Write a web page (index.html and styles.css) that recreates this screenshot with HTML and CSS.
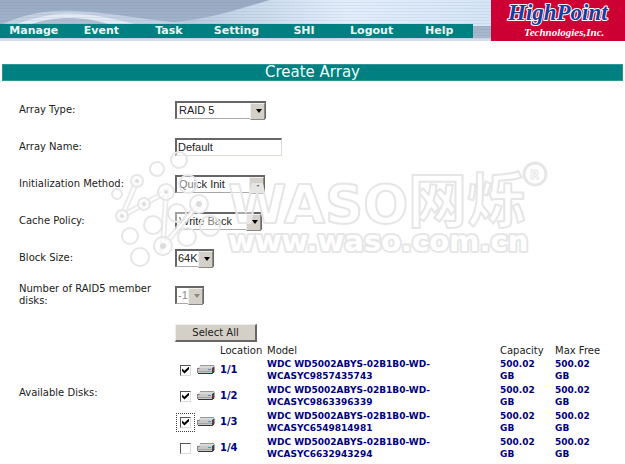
FILE: index.html
```html
<!DOCTYPE html>
<html lang="en">
<head>
<meta charset="utf-8">
<title>Create Array</title>
<link rel="stylesheet" href="styles.css">
</head>
<body>
<svg class="defs" aria-hidden="true">
  <linearGradient id="sky" x1="0" x2="1" y1="0" y2="0">
    <stop offset="0" stop-color="#a9bad0"/><stop offset=".3" stop-color="#c6d6e9"/><stop offset=".6" stop-color="#e3eefb"/><stop offset="1" stop-color="#d6e5f6"/>
  </linearGradient>
  <symbol id="disk" viewBox="0 0 18 10">
    <path d="M3 1H17L15 3H1Z" fill="#d8d8d8"/>
    <path d="M3 .5H17" stroke="#999"/>
    <path d="M1 3H15V8H1Z" fill="#c4c8c6"/>
    <path d="M15 3L17.500 1V7L15 9Z" fill="#444"/>
    <path d="M1 6.500H15" stroke="#a2a2a2"/>
    <path d="M.5 3V8" stroke="#888"/>
    <path d="M1 8.500H15L17 7" fill="none" stroke="#333"/>
    <path d="M11 4.500H14" stroke="#0bb"/>
    <path d="M1 3.500H2.500" stroke="#b050b0"/>
  </symbol>
</svg>
<header class="top">
  <div class="banner">
    <svg class="swoosh" viewBox="0 0 491 41" preserveAspectRatio="none" aria-hidden="true">
      <path d="M130 26C210 22 240 8 270 0H491V26Z" fill="url(#sky)"/>
      <path d="M0 25C30 12 50 10 75 11C120 13 150 22 220 26H0Z" fill="#c3d0e2"/>
      <path d="M12 26C40 15 60 12 80 14C110 16 130 24 145 26Z" fill="#e2eaf5"/>
      <path d="M25 26C50 17 70 17 85 19C100 21 108 24 114 26Z" fill="#aebdd2"/>
      <path d="M0 38H491V41H0Z" fill="#d3dded"/>
    </svg>
    <nav class="menu">
      <a href="#">Manage</a><a href="#">Event</a><a href="#">Task</a><a href="#">Setting</a><a href="#">SHI</a><a href="#">Logout</a><a href="#">Help</a>
    </nav>
  </div>
  <svg class="brand" viewBox="0 0 134 41" role="img" aria-label="HighPoint Technologies, Inc.">
    <text class="brand-name" x="17" y="20">HighPoint</text>
    <text class="brand-sub" x="33" y="36">Technologies,Inc.</text>
  </svg>
</header>
<main>
  <h1>Create Array</h1>
  <form class="form">
    <div class="row"><label for="type">Array Type:</label>
      <span class="pick w-type"><select id="type"><option>RAID 5</option></select></span></div>
    <div class="row"><label for="name">Array Name:</label>
      <input class="name" id="name" type="text" value="Default"></div>
    <div class="row"><label for="init">Initialization Method:</label>
      <span class="pick w-init"><select id="init"><option>Quick Init</option></select></span></div>
    <div class="row"><label for="cache">Cache Policy:</label>
      <span class="pick w-cache"><select id="cache"><option>Write Back</option></select></span></div>
    <div class="row"><label for="block">Block Size:</label>
      <span class="pick w-block"><select id="block"><option>64K</option></select></span></div>
    <div class="row"><label for="members">Number of RAID5 member disks:</label>
      <span class="pick w-members off"><select id="members" disabled><option>-1</option></select></span></div>
    <div class="row disks"><span>Available Disks:</span>
      <div class="list">
        <button type="button">Select All</button>
        <table>
          <thead><tr><th class="c-check"></th><th class="c-icon"></th><th class="c-loc">Location</th><th>Model</th><th class="c-cap">Capacity</th><th class="c-free">Max Free</th></tr></thead>
          <tbody>
            <tr><td><input type="checkbox" aria-label="Disk 1/1" checked></td><td><svg class="disk"><use href="#disk"/></svg></td><td class="loc">1/1</td><td>WDC WD5002ABYS-02B1B0-WD-WCASYC9857435743</td><td class="size">500.02 GB</td><td class="size">500.02 GB</td></tr>
            <tr><td><input type="checkbox" aria-label="Disk 1/2" checked></td><td><svg class="disk"><use href="#disk"/></svg></td><td class="loc">1/2</td><td>WDC WD5002ABYS-02B1B0-WD-WCASYC9863396339</td><td class="size">500.02 GB</td><td class="size">500.02 GB</td></tr>
            <tr><td><input class="focused" type="checkbox" aria-label="Disk 1/3" checked></td><td><svg class="disk"><use href="#disk"/></svg></td><td class="loc">1/3</td><td>WDC WD5002ABYS-02B1B0-WD-WCASYC6549814981</td><td class="size">500.02 GB</td><td class="size">500.02 GB</td></tr>
            <tr><td><input type="checkbox" aria-label="Disk 1/4"></td><td><svg class="disk"><use href="#disk"/></svg></td><td class="loc">1/4</td><td>WDC WD5002ABYS-02B1B0-WD-WCASYC6632943294</td><td class="size">500.02 GB</td><td class="size">500.02 GB</td></tr>
          </tbody>
        </table>
      </div>
    </div>
  </form>
  <svg class="watermark" viewBox="105 145 450 125" aria-hidden="true">
    <g class="links">
      <path d="M137 181L122 216L144 204L166 192L163 246L199 204"/>
    </g>
    <g class="links-core">
      <path d="M137 181L122 216L144 204L166 192L163 246L199 204"/>
    </g>
    <g class="rings">
      <circle cx="157" cy="169" r="7"/><circle cx="179" cy="160" r="8"/><circle cx="117" cy="194" r="5"/>
      <circle cx="153" cy="225" r="9"/><circle cx="130" cy="236" r="8"/><circle cx="140" cy="257" r="9"/>
      <circle cx="177" cy="213" r="9"/><circle cx="187" cy="237" r="9"/><circle cx="210" cy="226" r="10"/><circle cx="188" cy="184" r="9"/>
      <circle class="node" cx="137" cy="181" r="6"/><circle class="node" cx="122" cy="216" r="6"/><circle class="node" cx="144" cy="204" r="6"/>
      <circle class="node" cx="166" cy="192" r="8"/><circle class="node" cx="163" cy="246" r="9"/><circle class="node" cx="199" cy="204" r="9"/>
    </g>
    <g class="dots">
      <circle cx="137" cy="181" r="2"/><circle cx="122" cy="216" r="2"/><circle cx="144" cy="204" r="2"/>
      <circle cx="166" cy="192" r="2"/><circle cx="163" cy="246" r="3"/><circle cx="199" cy="204" r="3"/>
    </g>
    <text class="wm-main" x="228" y="223">WASO</text>
    <text class="wm-cjk" x="408" y="222">网烁</text>
    <text class="wm-url" x="228" y="251">www.waso.com.cn</text>
    <circle class="reg" cx="535" cy="174" r="11"/>
    <text class="wm-r" x="530" y="179">R</text>
  </svg>
</main>
</body>
</html>
```
FILE: styles.css
```css
* { box-sizing: border-box; }
body {
  margin: 0;
  background: #fff;
  color: #222;
  font: 10px/12px "DejaVu Sans", Verdana, sans-serif;
}
.defs { position: absolute; width: 0; height: 0; }

.top { display: flex; height: 41px; }
.banner {
  position: relative;
  flex: 1;
  display: flex;
  align-items: flex-start;
  padding: 24px 18px 0 0;
  background: linear-gradient(#98aac2, #a9bacf);
}
.banner::after {
  content: "";
  position: absolute;
  inset: 0;
  background: repeating-linear-gradient(transparent 0 2px, rgba(110, 130, 160, .12) 2px 3px);
}
.swoosh { position: absolute; inset: 0; width: 100%; height: 100%; }
.menu {
  position: relative;
  z-index: 1;
  flex: 1;
  display: grid;
  grid-template-columns: repeat(7, 1fr);
  background: #008080;
}
.menu a {
  color: #e8f6f6;
  font-size: 11px;
  font-weight: bold;
  line-height: 14px;
  text-align: center;
  text-decoration: none;
}
.brand { width: 134px; height: 41px; background: #cc0033; }
.brand text { font-family: "Liberation Serif", serif; font-weight: bold; font-style: italic; }
.brand-name { font-size: 23px; fill: #1c3c9c; stroke: #fff; stroke-width: 2px; stroke-linejoin: round; paint-order: stroke; }
.brand-sub { font-size: 11px; fill: #fff; }

main { position: relative; padding: 23px 2px 0; }
h1 {
  margin: 0;
  border: 1px solid #2f9494;
  background: #008080;
  color: #f0fafa;
  font-size: 15px;
  font-weight: normal;
  line-height: 15px;
  text-align: center;
}
.form { padding: 10px 0 0 17px; }
.row {
  display: grid;
  grid-template-columns: 144px 1fr;
  column-gap: 12px;
  align-items: center;
  min-height: 37px;
}
.disks { margin-top: 11px; }

.pick, .name {
  border: 1px solid #e0dcd4;
  border-top: 2px solid #666;
  border-left: 2px solid #666;
  background: #fff;
}
.pick { position: relative; height: 18px; border-right-color: #666; border-bottom-color: #aaa; }
.pick select {
  display: block;
  width: 100%;
  height: 15px;
  margin: 0;
  padding: 0 0 0 2px;
  border: 0;
  appearance: none;
  background: none;
  color: #222;
  font: 11px/15px "Liberation Sans", Arial, sans-serif;
  opacity: 1;
}
.pick::before {
  content: "";
  position: absolute;
  top: 0;
  right: 0;
  width: 13px;
  height: 15px;
  border: 1px solid #eee;
  border-right-color: #888;
  border-bottom-color: #888;
  background: #d4d0c8;
}
.pick::after {
  content: "";
  position: absolute;
  top: 6px;
  right: 3px;
  border: 3px solid transparent;
  border-top: 4px solid #000;
  border-bottom: 0;
}
.off select { padding-left: 1px; color: #888; }
.off::after { border-top-color: #888; }
.w-type { width: 91px; }
.w-init { width: 90px; }
.w-cache { width: 87px; }
.w-block { width: 39px; }
.w-block select { padding-left: 1px; }
.w-members { width: 29px; }
.name {
  width: 107px;
  height: 18px;
  margin: 0;
  padding: 0 1px;
  color: #222;
  font: 11px/15px "Liberation Sans", Arial, sans-serif;
}

button {
  display: block;
  width: 82px;
  height: 18px;
  padding: 0;
  border: 1px solid #eee;
  border-right: 2px solid #666;
  border-bottom: 2px solid #666;
  background: #d4d0c8;
  color: #222;
  font: 10px/15px "DejaVu Sans", Verdana, sans-serif;
}
table { width: 100%; table-layout: fixed; border-collapse: collapse; }
th { height: 15px; padding: 0; font-weight: normal; text-align: left; vertical-align: bottom; }
td {
  padding: 1px 0;
  color: #000080;
  font-size: 9px;
  font-weight: bold;
  line-height: 12px;
  vertical-align: middle;
}
.c-check { width: 22px; }
.c-icon { width: 23px; }
.c-loc { width: 47px; }
.c-cap { width: 55px; }
.c-free { width: 68px; }
td.loc { font-size: 10px; }
td.size { padding-right: 18px; }
.disk { display: block; width: 18px; height: 10px; }
input[type="checkbox"] {
  display: block;
  width: 11px;
  height: 11px;
  margin: 0 0 0 5px;
  appearance: none;
  border: 1px solid #ddd;
  border-top-color: #555;
  border-left-color: #555;
  background: #fff;
}
input[type="checkbox"]:checked::before {
  content: "";
  display: block;
  width: 7px;
  height: 7px;
  margin: 1px;
  background: #000;
  clip-path: polygon(0 30%, 35% 60%, 100% 0, 100% 38%, 35% 100%, 0 65%);
}
input.focused { outline: 1px dotted #444; outline-offset: 3px; }

.watermark {
  position: absolute;
  top: 104px;
  left: 105px;
  width: 450px;
  height: 125px;
  pointer-events: none;
}
.watermark text {
  fill: rgba(255, 255, 255, .45);
  stroke: #e6e6e6;
  stroke-width: 2px;
  stroke-linejoin: round;
  font-weight: bold;
}
.watermark .wm-main { font-size: 53px; }
.watermark .wm-cjk { font-family: "Noto Sans CJK SC", sans-serif; font-size: 59px; }
.watermark .wm-url { font-size: 29px; fill: #fff; stroke-width: 4px; paint-order: stroke; }
.watermark .wm-r { font-size: 12px; stroke-width: 1px; }
.links { fill: none; stroke: #e6e6e6; stroke-width: 6px; opacity: .8; }
.links-core { fill: none; stroke: #fff; stroke-width: 2px; }
.rings { fill: rgba(255, 255, 255, .4); stroke: #e6e6e6; stroke-width: 2px; }
.rings .node { fill: #fff; fill-opacity: .6; }
.dots { fill: #ddd; }
.reg { fill: none; stroke: #e6e6e6; stroke-width: 3px; }
```
